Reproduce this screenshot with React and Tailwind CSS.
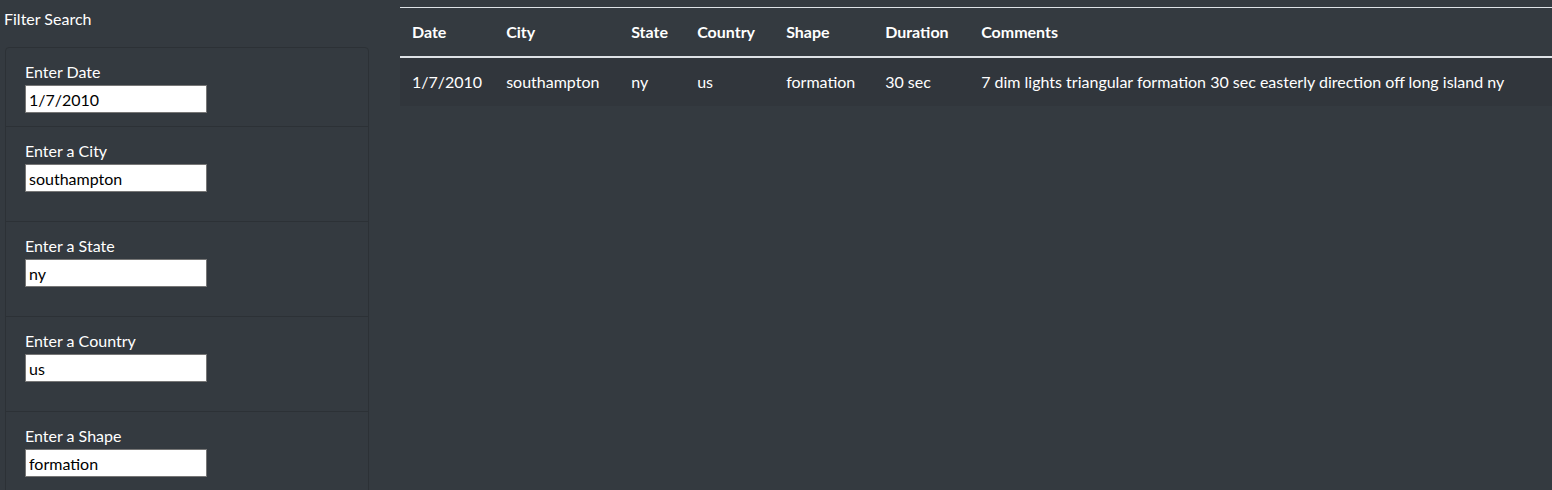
import React from "react";

const filters = [
  { label: "Enter Date", value: "1/7/2010", first: true },
  { label: "Enter a City", value: "southampton" },
  { label: "Enter a State", value: "ny" },
  { label: "Enter a Country", value: "us" },
  { label: "Enter a Shape", value: "formation" },
];

const columns = [
  { name: "Date", w: "w-[94px]" },
  { name: "City", w: "w-[125px]" },
  { name: "State", w: "w-[66px]" },
  { name: "Country", w: "w-[89px]" },
  { name: "Shape", w: "w-[99px]" },
  { name: "Duration", w: "w-[96px]" },
  { name: "Comments", w: "" },
];

const row = [
  "1/7/2010",
  "southampton",
  "ny",
  "us",
  "formation",
  "30 sec",
  "7 dim lights triangular formation 30 sec easterly direction off long island ny",
];

export default function App() {
  return (
    <div className="flex min-h-[490px] bg-[#343a40] font-['Lato',sans-serif] text-white">
      <aside className="w-[400px] shrink-0 pl-[5px] pr-[31px]">
        <h5 className="pt-[9px] -ml-[1px] text-[16px] leading-[20px]">Filter Search</h5>
        <ul className="mt-[18px] rounded border border-[#2c3136]">
          {filters.map((f, i) => (
            <li
              key={f.label}
              className={`px-[19px] pt-[11px] ${f.first ? "pb-[13px]" : "pb-[29px]"} ${
                i > 0 ? "border-t border-[#2c3136]" : ""
              }`}
            >
              <label className="block text-[16px] leading-[26px]">{f.label}</label>
              <input
                readOnly
                value={f.value}
                className="block h-[28px] w-[182px] border border-[#767676] bg-white px-[3px] text-[16px] text-black outline-none"
              />
            </li>
          ))}
        </ul>
      </aside>
      <main className="flex-1 pt-[7px]">
        <table className="w-full border-collapse text-[16px]">
          <thead>
            <tr className="border-t border-[#dee2e6] border-b-2">
              {columns.map((c) => (
                <th
                  key={c.name}
                  className={`${c.w} px-[12px] pt-[15px] pb-[15px] text-left font-bold leading-[18px]`}
                >
                  {c.name}
                </th>
              ))}
            </tr>
          </thead>
          <tbody>
            <tr className="bg-[#31363c]">
              {row.map((v, i) => (
                <td key={i} className="px-[12px] py-[12px] leading-[24px]">
                  {v}
                </td>
              ))}
            </tr>
          </tbody>
        </table>
      </main>
    </div>
  );
}
